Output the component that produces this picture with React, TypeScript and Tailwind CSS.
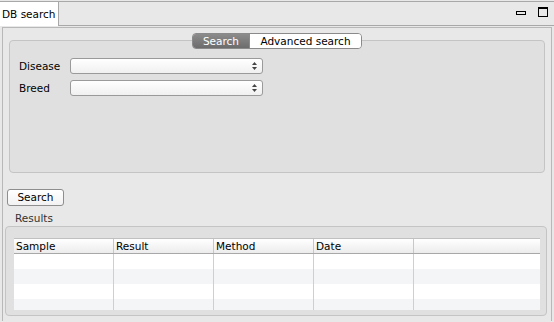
const font = { fontFamily: '"DejaVu Sans", "Liberation Sans", sans-serif' }

const Combo = () => (
  <div className="w-[193px] h-[16px] rounded-[3px] border border-[#9a9a9a] bg-gradient-to-b from-white to-[#f0f0f0] flex items-center justify-end pr-[5px]">
    <svg width="5" height="8" viewBox="0 0 5 8" className="text-[#444]">
      <path d="M0 3 L2.5 0 L5 3 Z" fill="currentColor" />
      <path d="M0 5 L2.5 8 L5 5 Z" fill="currentColor" />
    </svg>
  </div>
)

export default function App() {
  const columns = ['Sample', 'Result', 'Method', 'Date', '']
  const rows = [0, 1, 2, 3]
  const colWidth = (i: number) => (i === 0 ? 'w-[99px]' : i < 4 ? 'w-[100px]' : 'flex-1')

  return (
    <div className="w-[554px] h-[322px] bg-[#e8e8e8] text-[10.5px] leading-[13px] text-black flex flex-col" style={font}>
      {/* Tab bar */}
      <div className="h-[25px] border-t border-[#a8a8a8] mt-[1px] flex items-end justify-between border-b border-b-[#a8a8a8]">
        <div className="h-[24px] -mb-[1px] bg-white border-r border-[#a8a8a8] px-[2px] flex items-center">
          DB search
        </div>
        <div className="flex items-center gap-[12px] pr-[6px] self-start mt-[5px]">
          <div className="w-[10px] h-[4px] border border-black mt-[1px]" />
          <div className="w-[10px] h-[10px] border border-black border-t-[2px]" />
        </div>
      </div>

      {/* Panel */}
      <div className="flex-1 mx-[2px] mt-[1px] mb-[1px] border border-[#b8b8b8] border-b-0 px-[6px] pt-[12px] flex flex-col">
        {/* Group box */}
        <div className="relative h-[133px] rounded-[4px] border border-[#c4c4c4] bg-[#e0e0e0] pt-[17px] pl-[9px]">
          <div className="absolute -top-[8px] left-[182px] flex h-[16px] rounded-[4px] border border-[#8a8a8a] overflow-hidden">
            <div className="w-[56px] bg-gradient-to-b from-[#8c8c8c] to-[#6c6c6c] text-white flex items-center justify-center">
              Search
            </div>
            <div className="w-[112px] bg-white flex items-center justify-center border-l border-[#8a8a8a]">
              Advanced search
            </div>
          </div>
          <div className="grid grid-cols-[51px_auto] gap-y-[6px] items-center w-max">
            <span>Disease</span>
            <Combo />
            <span>Breed</span>
            <Combo />
          </div>
        </div>

        {/* Search button */}
        <div className="mt-[16px] -ml-[2px]">
          <button className="w-[57px] h-[17px] rounded-[3px] border border-[#8e8e8e] bg-gradient-to-b from-white to-[#f2f2f2] flex items-center justify-center">
            Search
          </button>
        </div>

        <div className="mt-[6px] ml-[6px] text-[#333]">Results</div>

        {/* Results box */}
        <div className="mt-[1px] -ml-[4px] w-[542px] h-[90px] rounded-[4px] border border-[#c4c4c4] bg-[#e0e0e0] pt-[11px] pl-[8px]">
          <div className="w-[526px] bg-white">
            <div className="flex h-[16px] bg-gradient-to-b from-white to-[#ececec] border-t border-[#c0c0c0] border-b border-b-[#a8a8a8]">
              {columns.map((c, i) => (
                <div
                  key={i}
                  className={`${colWidth(i)} px-[2px] flex items-center ${i > 0 ? 'border-l border-[#c8c8c8]' : ''}`}
                >
                  {c}
                </div>
              ))}
            </div>
            {rows.map((r) => (
              <div key={r} className={`flex ${r === 3 ? 'h-[11px]' : 'h-[15px]'} ${r % 2 ? 'bg-[#f3f5f7]' : 'bg-white'}`}>
                {columns.map((_, i) => (
                  <div key={i} className={`${colWidth(i)} ${i > 0 ? 'border-l border-[#cfcfcf]' : ''}`} />
                ))}
              </div>
            ))}
          </div>
        </div>
      </div>
    </div>
  )
}
